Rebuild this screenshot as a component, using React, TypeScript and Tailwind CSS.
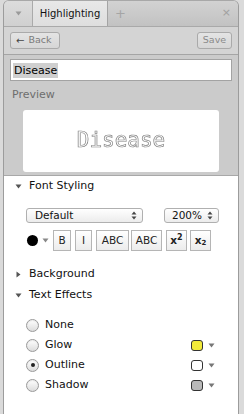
import React from 'react';

const Tri = ({ dir = 'down', color = '#555' }: { dir?: 'down' | 'right'; color?: string }) => (
    <svg width="7" height="7" viewBox="0 0 7 7" className="shrink-0">
        {dir === 'down' ? <polygon points="0.5,1.5 6.5,1.5 3.5,5.5" fill={color} /> : <polygon points="1.5,0.5 5.5,3.5 1.5,6.5" fill={color} />}
    </svg>
);

const UpDown = () => (
    <svg width="6" height="9" viewBox="0 0 6 9" className="shrink-0">
        <polygon points="3,0.5 5.5,3.5 0.5,3.5" fill="#444" />
        <polygon points="0.5,5.5 5.5,5.5 3,8.5" fill="#444" />
    </svg>
);

const Radio = ({ checked }: { checked?: boolean }) => (
    <div className="w-[13px] h-[13px] rounded-full border border-[#9a9a9a] bg-gradient-to-b from-[#ffffff] to-[#dcdcdc] flex items-center justify-center shadow-[inset_0_1px_1px_rgba(0,0,0,0.08)]">
        {checked && <div className="w-[4px] h-[4px] rounded-full bg-[#222]" />}
    </div>
);

const Swatch = ({ color }: { color: string }) => (
    <div className="flex items-center gap-[5px]">
        <div className="w-[12px] h-[11px] rounded-[3px] border border-[#333]" style={{ backgroundColor: color }} />
        <Tri color="#777" />
    </div>
);

const ToolBtn = ({ children, className = '' }: { children: React.ReactNode; className?: string }) => (
    <div className={`h-[21px] border border-[#b5b5b5] bg-gradient-to-b from-[#ffffff] to-[#ececec] flex items-center justify-center text-[10.5px] text-[#222] ${className}`}>
        {children}
    </div>
);

export default function App() {
    const effects = [
        { label: 'None', swatch: null as string | null },
        { label: 'Glow', swatch: '#f2ea3a' },
        { label: 'Outline', swatch: '#ffffff', checked: true },
        { label: 'Shadow', swatch: '#b9b9b9' },
    ];

    return (
        <div className="w-[244px] h-[414px] bg-[#dadada] font-['DejaVu_Sans',sans-serif] overflow-hidden">
            <div className="ml-[3px] w-[236px] h-full flex flex-col border-x border-[#9c9c9c] rounded-t-[6px] overflow-hidden border-t border-t-[#a8a8a8]">
                {/* Tab bar */}
                <div className="h-[26px] flex items-stretch bg-gradient-to-b from-[#d2d2d2] to-[#c2c2c2] border-b border-[#a9a9a9]">
                    <div className="w-[29px] flex items-center justify-center bg-gradient-to-b from-[#dcdcdc] to-[#d0d0d0] border-r border-[#aaaaaa]">
                        <Tri color="#9a9a9a" />
                    </div>
                    <div className="w-[75px] flex items-center justify-center bg-gradient-to-b from-[#e8e8e8] to-[#dedede] border-r border-[#a4a4a4] text-[10px] text-[#111]">
                        Highlighting
                    </div>
                    <div className="ml-[7px] flex items-center text-[13px] text-[#a5a5a5]">+</div>
                    <div className="ml-auto mr-[7px] flex items-center text-[11px] text-[#a0a0a0]">×</div>
                </div>

                {/* Toolbar */}
                <div className="h-[28px] flex items-center justify-between px-[6px] bg-[#d4d4d4] border-b border-[#a5a5a5]">
                    <div className="h-[17px] w-[50px] rounded-[3px] border border-[#aaaaaa] bg-gradient-to-b from-[#e4e4e4] to-[#d6d6d6] flex items-center gap-[4px] pl-[5px] text-[9.5px] text-[#7a7a7a]">
                        <span className="text-[10px] text-[#444] leading-none">←</span>
                        <span>Back</span>
                    </div>
                    <div className="h-[17px] w-[35px] rounded-[3px] border border-[#aaaaaa] bg-gradient-to-b from-[#e4e4e4] to-[#d6d6d6] flex items-center justify-center text-[9.5px] text-[#8a8a8a]">
                        Save
                    </div>
                </div>

                {/* Gray section */}
                <div className="bg-[#cbcbcb] px-[6px] pt-[4px] pb-[3px] border-b border-[#a8a8a8]">
                    <div className="h-[22px] bg-white border border-[#a3a3a3] flex items-center pl-[2px]">
                        <span className="bg-[#cfcfcf] text-[11px] text-black px-[1px] leading-[15px]">Disease</span>
                    </div>
                    <div className="mt-[7px] pl-[2px] text-[11px] leading-[14px] text-[#6e6e6e]">Preview</div>
                    <div className="mt-[8px] mx-[13px] h-[62px] bg-white rounded-[3px] flex items-center justify-center">
                        <span className="antialiased opacity-[0.99] [transform:translateZ(0)] font-['DejaVu_Sans_Mono',monospace] text-[21px] text-white [-webkit-text-stroke:0.7px_#808080]">Disease</span>
                    </div>
                </div>

                {/* White section */}
                <div className="flex-1 bg-white text-[11px] text-[#111]">
                    <div className="mt-[1px] h-[18px] flex items-center gap-[7px] pl-[11px]">
                        <Tri />
                        <span>Font Styling</span>
                    </div>

                    <div className="mt-[13px] flex items-center pl-[22px]">
                        <div className="w-[117px] h-[15px] rounded-[3px] border border-[#b0b0b0] bg-gradient-to-b from-[#ffffff] to-[#ececec] flex items-center justify-between pl-[8px] pr-[5px] text-[10.5px]">
                            <span>Default</span>
                            <UpDown />
                        </div>
                        <div className="ml-[21px] w-[55px] h-[15px] rounded-[3px] border border-[#b0b0b0] bg-gradient-to-b from-[#ffffff] to-[#ececec] flex items-center justify-between pl-[7px] pr-[5px] text-[10.5px]">
                            <span>200%</span>
                            <UpDown />
                        </div>
                    </div>

                    <div className="mt-[7px] flex items-center pl-[23px]">
                        <div className="w-[11px] h-[11px] rounded-full bg-black" />
                        <div className="ml-[4px]"><Tri color="#888" /></div>
                        <ToolBtn className="ml-[4px] w-[18px]">B</ToolBtn>
                        <ToolBtn className="ml-[4px] w-[17px]">I</ToolBtn>
                        <ToolBtn className="ml-[4px] w-[33px]">ABC</ToolBtn>
                        <ToolBtn className="ml-[2px] w-[31px]">ABC</ToolBtn>
                        <ToolBtn className="ml-[4px] w-[21px]"><span className="font-bold">x<sup className="text-[8px]">2</sup></span></ToolBtn>
                        <ToolBtn className="ml-[3px] w-[21px]"><span className="font-bold">x<sub className="text-[7px]">2</sub></span></ToolBtn>
                    </div>

                    <div className="mt-[14px] h-[18px] flex items-center gap-[7px] pl-[11px]">
                        <Tri dir="right" />
                        <span>Background</span>
                    </div>
                    <div className="mt-[3px] h-[18px] flex items-center gap-[7px] pl-[11px]">
                        <Tri />
                        <span>Text Effects</span>
                    </div>

                    <div className="mt-[11px] flex flex-col">
                        {effects.map(e => (
                            <div key={e.label} className="h-[20px] flex items-center pl-[22px] pr-[23px]">
                                <Radio checked={e.checked} />
                                <span className="ml-[6px]">{e.label}</span>
                                {e.swatch && <div className="ml-auto"><Swatch color={e.swatch} /></div>}
                            </div>
                        ))}
                    </div>
                </div>
            </div>
        </div>
    );
}
